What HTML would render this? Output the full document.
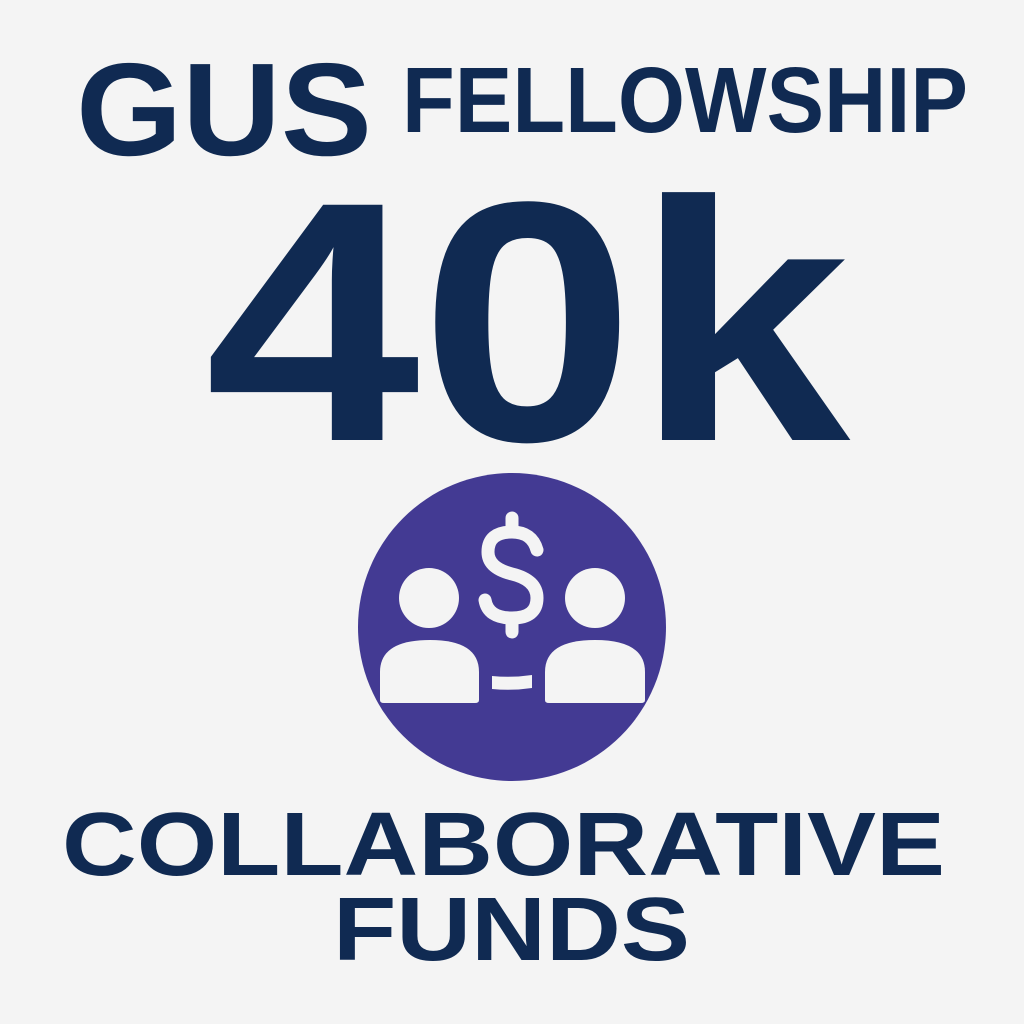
<!DOCTYPE html>
<html><head><style>
html,body{margin:0;padding:0;background:#f4f4f4;}
svg{display:block;}
text{font-family:"Liberation Sans",Arial,sans-serif;font-weight:bold;fill:#102a52;}
</style></head><body>
<svg width="1024" height="1024" viewBox="0 0 1024 1024" xmlns="http://www.w3.org/2000/svg">
<rect width="1024" height="1024" fill="#f4f4f4"/>
<text x="76" y="155" font-size="132" textLength="296" lengthAdjust="spacingAndGlyphs">GUS</text>
<text x="402" y="132" font-size="93" textLength="566" lengthAdjust="spacingAndGlyphs">FELLOWSHIP</text>
<text x="205" y="440" font-size="342" textLength="645" lengthAdjust="spacingAndGlyphs">40k</text>
<text x="62" y="875" font-size="90" textLength="883" lengthAdjust="spacingAndGlyphs">COLLABORATIVE</text>
<text x="333" y="960" font-size="90" textLength="357" lengthAdjust="spacingAndGlyphs">FUNDS</text>
<circle cx="512" cy="627" r="154" fill="#433a93"/>
<g fill="#f4f4f4">
<circle cx="429" cy="598" r="30"/>
<circle cx="595" cy="598" r="30"/>
<path d="M380 700 L380 672 Q380 640 430 640 Q479 640 479 672 L479 700 Q479 703 475 703 L384 703 Q380 703 380 700Z"/>
<path d="M545 700 L545 672 Q545 640 595 640 Q645 640 645 672 L645 700 Q645 703 641 703 L549 703 Q545 703 545 700Z"/>
<path d="M492 676 Q512 678 532 675 L532 688 Q512 691 492 689Z"/>
</g>
<g fill="none" stroke="#f4f4f4" stroke-width="13" stroke-linecap="round">
<path d="M537 550 Q532 532 512 532 Q488 532 488 552 Q488 568 512 574 Q537 580 537 598 Q537 618 512 618 Q488 618 485 600"/>
<line x1="512" y1="518" x2="512" y2="530"/>
<line x1="512" y1="620" x2="512" y2="632"/>
</g>
</svg>
</body></html>
